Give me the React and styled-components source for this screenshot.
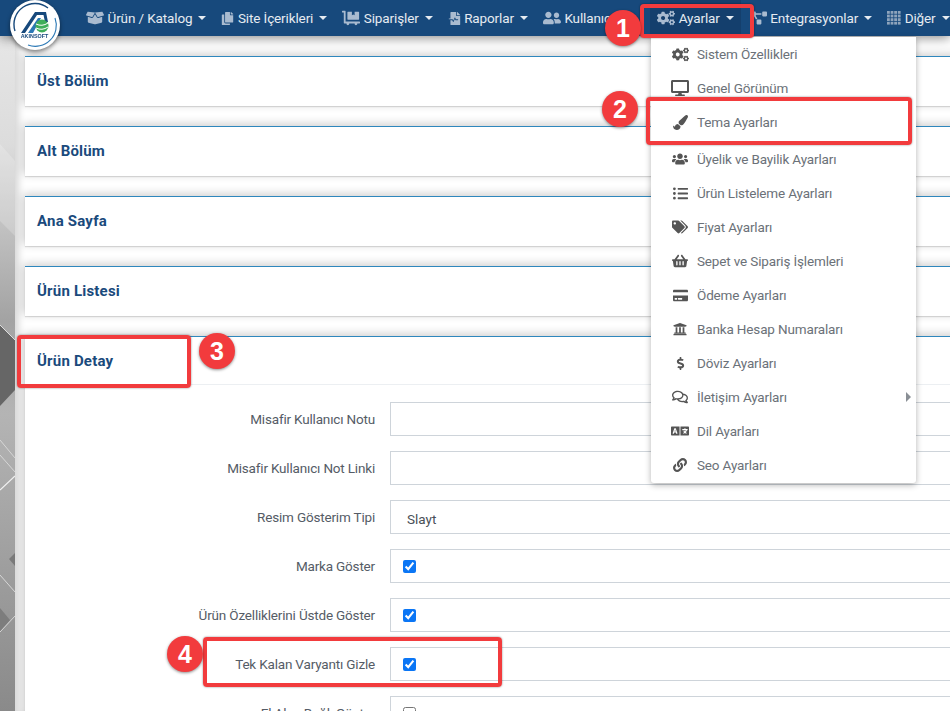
import React from 'react';
import styled, { createGlobalStyle } from 'styled-components';
import {
  FaBoxOpen,
  FaCopy,
  FaDollyFlatbed,
  FaFileMedicalAlt,
  FaUserFriends,
  FaCogs,
  FaProjectDiagram,
  FaDesktop,
  FaPaintBrush,
  FaUsers,
  FaListUl,
  FaTags,
  FaShoppingBasket,
  FaCreditCard,
  FaUniversity,
  FaDollarSign,
  FaRegComments,
  FaLanguage,
  FaLink,
} from 'react-icons/fa';

const FONT = 'Roboto, "Open Sans", sans-serif';

const GlobalStyle = createGlobalStyle`
  html, body {
    margin: 0;
    height: 100%;
    overflow: hidden;
    background: #fff;
    font-family: ${FONT};
  }
`;

const Shell = styled.div`
  position: relative;
  width: 950px;
  height: 711px;
  overflow: hidden;
`;

const Header = styled.header`
  position: relative;
  z-index: 2;
  display: flex;
  align-items: center;
  height: 36px;
  padding-left: 78.5px;
  background: #17497c;
  box-shadow: 0 2px 12px rgba(0, 0, 0, 0.45);
`;

const NavItem = styled.a`
  display: flex;
  flex: none;
  align-items: center;
  height: 36px;
  margin: ${(p) => (p.$active ? '0 2px 0 14px' : '0')};
  padding: 0 7.5px;
  color: #e6ebf1;
  font-size: 13.5px;
  white-space: nowrap;
  letter-spacing: -0.12px;
  background: ${(p) => (p.$active ? '#143f6d' : 'transparent')};

  svg {
    flex: none;
    margin-right: 3.5px;
    color: #a9bbd0;
  }
`;

const Caret = styled.span`
  width: 0;
  height: 0;
  margin-left: 6px;
  border-top: 4px solid #e6ebf1;
  border-right: 4px solid transparent;
  border-left: 4px solid transparent;
`;

const Logo = styled.svg`
  position: absolute;
  top: 0;
  left: 9px;
  z-index: 3;
  width: 52px;
  height: 52px;
  filter: drop-shadow(0 2px 2px rgba(0, 0, 0, 0.5));
`;

const Body = styled.div`
  display: flex;
  height: 675px;
`;

const Texture = styled.svg`
  flex: none;
  width: 15px;
  height: 675px;
`;

const Content = styled.main`
  flex: none;
  width: 1100px;
  padding: 20px 0 0 10px;
  background: #fff;
  box-shadow: inset 9px 0 8px -6px rgba(0, 0, 0, 0.18);
`;

const Panel = styled.section`
  margin-bottom: 20px;
  border-top: 1px solid #2e87bd;
  background: #fff;
  box-shadow: -2px -2px 9px rgba(0, 0, 0, 0.2), 0 1px 1px rgba(0, 0, 0, 0.12);
`;

const PanelTitle = styled.h3`
  box-sizing: border-box;
  margin: 0;
  height: ${(p) => (p.$open ? '48px' : '49px')};
  padding-left: 12px;
  border-bottom: ${(p) => (p.$open ? '1px solid #eceff2' : 'none')};
  color: #1a4a7c;
  font-size: 15px;
  font-weight: 700;
  line-height: 48px;
  letter-spacing: 0.2px;
`;

const PanelBody = styled.div`
  padding: 17px 0 0;
`;

const Row = styled.div`
  display: flex;
  align-items: center;
  height: 34px;
  margin-bottom: 15px;
`;

const Label = styled.label`
  flex: none;
  width: 350px;
  color: #555c66;
  font-size: 13.5px;
  text-align: right;
  letter-spacing: -0.18px;
`;

const Field = styled.div`
  display: flex;
  flex: 1;
  align-items: center;
  box-sizing: border-box;
  height: 34px;
  margin-left: 15px;
  padding-left: 16px;
  border: 1px solid #ced4da;
  color: #495057;
  font-size: 13.5px;

  input {
    width: 13px;
    height: 13px;
    margin: 0 0 0 -4px;
    accent-color: #0b76f5;
  }
`;

const SelectValue = styled.span`
  margin-top: 3px;
`;

const Menu = styled.ul`
  position: absolute;
  top: 37px;
  left: 651px;
  z-index: 3;
  box-sizing: border-box;
  width: 265px;
  height: 446px;
  margin: 0;
  padding: 0;
  border-radius: 0 0 3px 3px;
  background: #fff;
  box-shadow: 0 2px 6px rgba(0, 0, 0, 0.3);
  list-style: none;
`;

const MenuItem = styled.li`
  position: relative;
  display: flex;
  align-items: center;
  height: 34px;
  margin-bottom: ${(p) => (p.$divided ? '3px' : '0')};
  color: #6b7178;
  font-size: 13.5px;
  letter-spacing: -0.15px;
`;

const MenuIcon = styled.span`
  display: flex;
  flex: none;
  align-items: center;
  justify-content: center;
  width: 18px;
  margin: 0 8px 0 20px;
  color: #555;
`;

const Arrow = styled.span`
  position: absolute;
  top: 12px;
  right: 5px;
  border-top: 5px solid transparent;
  border-bottom: 5px solid transparent;
  border-left: 5px solid #8a8f95;
`;

const Callout = styled.div`
  position: absolute;
  top: ${(p) => p.$y}px;
  left: ${(p) => p.$x}px;
  z-index: 4;
  box-sizing: border-box;
  width: ${(p) => p.$w}px;
  height: ${(p) => p.$h}px;
  border: 4px solid #f23b3d;
  border-radius: 4px;
  box-shadow: 0 0 2px rgba(0, 0, 0, 0.5);
`;

const Badge = styled.div`
  position: absolute;
  top: ${(p) => p.$y - 18}px;
  left: ${(p) => p.$x - 18}px;
  z-index: 5;
  display: flex;
  align-items: center;
  justify-content: center;
  width: 36px;
  height: 36px;
  border-radius: 50%;
  background: #f23b3d;
  box-shadow: 0 1px 3px rgba(0, 0, 0, 0.45);
  color: #fff;
  font-family: 'Liberation Sans', sans-serif;
  font-size: 25px;
  font-weight: 700;
`;

// small dotted grid used for the last menu
const GridIcon = ({ size }) => (
  <svg viewBox="0 0 14 14" width={size} height={size} fill="#8ea4bc">
    {[0, 3.6, 7.2, 10.8].map((y) =>
      [0, 3.6, 7.2, 10.8].map((x) => <rect key={`${x}-${y}`} x={x} y={y} width="2.8" height="2.8" />)
    )}
  </svg>
);

const navItems = [
  { icon: FaBoxOpen, size: 18, label: 'Ürün / Katalog' },
  { icon: FaCopy, size: 13, label: 'Site İçerikleri' },
  { icon: FaDollyFlatbed, size: 18, label: 'Siparişler' },
  { icon: FaFileMedicalAlt, size: 13, label: 'Raporlar' },
  { icon: FaUserFriends, size: 18, label: 'Kullanıcı' },
  { icon: FaCogs, size: 18, label: 'Ayarlar', active: true },
  { icon: FaProjectDiagram, size: 16, label: 'Entegrasyonlar' },
  { icon: GridIcon, size: 14, label: 'Diğer' },
];

const menuItems = [
  { icon: FaCogs, size: 17, label: 'Sistem Özellikleri' },
  { icon: FaDesktop, size: 18, label: 'Genel Görünüm' },
  { icon: FaPaintBrush, size: 15, label: 'Tema Ayarları', divided: true },
  { icon: FaUsers, size: 16, label: 'Üyelik ve Bayilik Ayarları' },
  { icon: FaListUl, size: 15, label: 'Ürün Listeleme Ayarları' },
  { icon: FaTags, size: 16, label: 'Fiyat Ayarları' },
  { icon: FaShoppingBasket, size: 16, label: 'Sepet ve Sipariş İşlemleri' },
  { icon: FaCreditCard, size: 15, label: 'Ödeme Ayarları' },
  { icon: FaUniversity, size: 14, label: 'Banka Hesap Numaraları' },
  { icon: FaDollarSign, size: 13, label: 'Döviz Ayarları' },
  { icon: FaRegComments, size: 16, label: 'İletişim Ayarları', more: true },
  { icon: FaLanguage, size: 18, label: 'Dil Ayarları' },
  { icon: FaLink, size: 14, label: 'Seo Ayarları' },
];

const closedPanels = ['Üst Bölüm', 'Alt Bölüm', 'Ana Sayfa', 'Ürün Listesi'];

const detailRows = [
  { label: 'Misafir Kullanıcı Notu' },
  { label: 'Misafir Kullanıcı Not Linki' },
  { label: 'Resim Gösterim Tipi', value: 'Slayt' },
  { label: 'Marka Göster', checked: true },
  { label: 'Ürün Özelliklerini Üstde Göster', checked: true },
  { label: 'Tek Kalan Varyantı Gizle', checked: true },
  { label: 'El Alan Bağlı Göster', checked: false },
];

const callouts = [
  { x: 640, y: 4, w: 114, h: 34 },
  { x: 646, y: 97, w: 266, h: 48 },
  { x: 17, y: 335, w: 174, h: 53 },
  { x: 203, y: 637, w: 299, h: 50 },
];

const badges = [
  { n: 1, x: 623, y: 28 },
  { n: 2, x: 620, y: 109 },
  { n: 3, x: 217, y: 351 },
  { n: 4, x: 185, y: 654 },
];

const BrandLogo = () => (
  <Logo viewBox="0 0 52 52">
    <circle cx="26" cy="25" r="25" fill="#fff" />
    <path d="M6 31A21 21 0 0 1 39 8" fill="none" stroke="#17497c" strokeWidth="1.4" />
    <path d="M46 18A21 21 0 0 1 19 45" fill="none" stroke="#2b78b5" strokeWidth="1.1" />
    <path d="M12 33 26 12H37L39 22H36L34.5 15H28L16 33Z" fill="#17497c" />
    <path d="M19 33 29 18H32L24 33Z" fill="#2b78b5" />
    <circle cx="33" cy="26" r="6.5" fill="#3fae5a" />
    <path d="M27 24Q33 27 39 23M27 28Q33 31 39 27" fill="none" stroke="#fff" strokeWidth="1" />
    <text
      x="25.5"
      y="38"
      textAnchor="middle"
      fill="#17497c"
      fontFamily="Liberation Sans, sans-serif"
      fontSize="5.4"
      fontWeight="700"
    >
      AKINSOFT
    </text>
  </Logo>
);

// grey geometric wallpaper that shows to the left of the content
const Wallpaper = () => (
  <Texture viewBox="0 0 15 675" preserveAspectRatio="none">
    <defs>
      <linearGradient id="wall" x1="0" y1="0" x2="0" y2="1">
        <stop offset="0" stopColor="#e6e6e6" />
        <stop offset="0.16" stopColor="#dcdcdc" />
        <stop offset="0.42" stopColor="#a3a3a3" />
        <stop offset="0.56" stopColor="#b4b4b4" />
        <stop offset="1" stopColor="#8a8a8a" />
      </linearGradient>
    </defs>
    <rect width="15" height="675" fill="url(#wall)" />
    <path d="M0 108 15 125V200L0 185Z" fill="#fff" opacity="0.2" />
    <path d="M0 289 15 304V354L0 370Z" fill="#666" />
    <path d="M0 289 15 304" stroke="#ddd" strokeWidth="1" />
    <path d="M0 404 15 422M0 419 15 436" stroke="#d6d6d6" strokeWidth="1" />
    <path d="M0 454 15 440" stroke="#f2f2f2" strokeWidth="1.2" />
    <path d="M15 517 9 523 15 530Z" fill="#7a7a7a" />
    <path d="M0 539 15 556" stroke="#d6d6d6" strokeWidth="1" />
    <path d="M0 572 10 584 0 596Z" fill="#7d7d7d" />
    <path d="M0 596 15 580" stroke="#d6d6d6" strokeWidth="1" />
  </Texture>
);

export default function App() {
  return (
    <Shell>
      <GlobalStyle />
      <BrandLogo />
      <Header>
        {navItems.map((item) => (
          <NavItem key={item.label} $active={item.active}>
            <item.icon size={item.size} />
            {item.label}
            <Caret />
          </NavItem>
        ))}
      </Header>

      <Menu>
        {menuItems.map((item) => (
          <MenuItem key={item.label} $divided={item.divided}>
            <MenuIcon>
              <item.icon size={item.size} />
            </MenuIcon>
            {item.label}
            {item.more ? <Arrow /> : null}
          </MenuItem>
        ))}
      </Menu>

      <Body>
        <Wallpaper />
        <Content>
          {closedPanels.map((title) => (
            <Panel key={title}>
              <PanelTitle>{title}</PanelTitle>
            </Panel>
          ))}
          <Panel>
            <PanelTitle $open>Ürün Detay</PanelTitle>
            <PanelBody>
              {detailRows.map((row) => (
                <Row key={row.label}>
                  <Label>{row.label}</Label>
                  <Field>
                    {row.value ? <SelectValue>{row.value}</SelectValue> : null}
                    {row.checked !== undefined ? (
                      <input type="checkbox" defaultChecked={row.checked} />
                    ) : null}
                  </Field>
                </Row>
              ))}
            </PanelBody>
          </Panel>
        </Content>
      </Body>

      {callouts.map((box) => (
        <Callout key={box.x} $x={box.x} $y={box.y} $w={box.w} $h={box.h} />
      ))}
      {badges.map((badge) => (
        <Badge key={badge.n} $x={badge.x} $y={badge.y}>
          {badge.n}
        </Badge>
      ))}
    </Shell>
  );
}
